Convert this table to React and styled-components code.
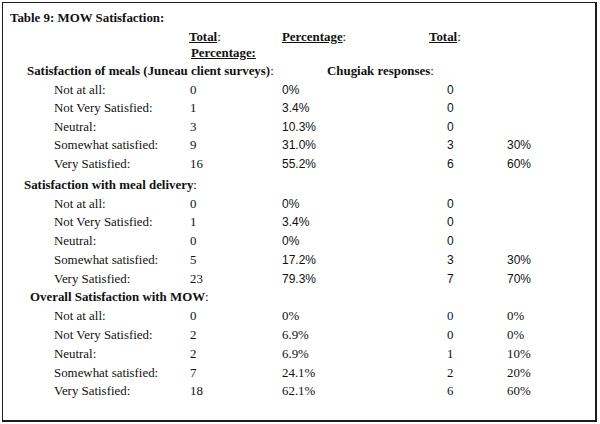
import React from "react";
import styled, { createGlobalStyle } from "styled-components";

const GlobalStyle = createGlobalStyle`
  html, body {
    margin: 0;
    padding: 0;
    background: #ffffff;
  }
  body {
    font-family: "Liberation Serif", "Times New Roman", serif;
    font-size: 12.9px;
    color: #111;
  }
`;

const Frame = styled.div`
  box-sizing: border-box;
  width: 595px;
  height: 420px;
  margin: 2px 0 0 2px;
  border: 1px solid #1c1c1c;
  border-right-width: 2px;
  border-bottom-width: 2px;
  padding-top: 5.5px;
`;

const Title = styled.div`
  height: 19px;
  line-height: 19px;
  padding-left: 7px;
  font-weight: bold;
`;

const HeadLine = styled.div`
  display: grid;
  grid-template-columns: 93px 147px auto;
  height: ${p => p.$h}px;
  line-height: ${p => p.$h}px;
  padding-left: ${p => p.$indent}px;
`;

const Under = styled.span`
  font-weight: bold;
  text-decoration: underline;
  text-underline-offset: 1px;
`;

const Bold = styled.span`
  font-weight: bold;
`;

const SectionHead = styled.div`
  display: grid;
  grid-template-columns: ${p => 327 - 3 - p.$indent}px auto;
  height: 19px;
  line-height: 19px;
  margin-top: ${p => p.$gap}px;
  padding-left: ${p => p.$indent}px;
  white-space: nowrap;
`;

const Row = styled.div`
  display: grid;
  grid-template-columns: 136px 92px 165px 60px auto;
  height: ${p => p.$h}px;
  line-height: ${p => p.$h}px;
  padding-left: 51px;
  white-space: nowrap;
`;

const Cell = styled.div`
  font-family: ${p =>
    p.$sans
      ? `"Liberation Sans", Arial, sans-serif`
      : `"Liberation Serif", "Times New Roman", serif`};
  font-size: ${p => (p.$sans ? "12px" : "12.9px")};
`;

const sections = [
  {
    title: "Satisfaction of meals (Juneau client surveys)",
    chugiak: true,
    indent: 24,
    gap: 2,
    rowH: 18.5,
    sans: true,
    rows: [
      ["Not at all:", "0", "0%", "0", ""],
      ["Not Very Satisfied:", "1", "3.4%", "0", ""],
      ["Neutral:", "3", "10.3%", "0", ""],
      ["Somewhat satisfied:", "9", "31.0%", "3", "30%"],
      ["Very Satisfied:", "16", "55.2%", "6", "60%"],
    ],
  },
  {
    title: "Satisfaction with meal delivery",
    indent: 21,
    gap: 2.5,
    rowH: 18.75,
    sans: true,
    rows: [
      ["Not at all:", "0", "0%", "0", ""],
      ["Not Very Satisfied:", "1", "3.4%", "0", ""],
      ["Neutral:", "0", "0%", "0", ""],
      ["Somewhat satisfied:", "5", "17.2%", "3", "30%"],
      ["Very Satisfied:", "23", "79.3%", "7", "70%"],
    ],
  },
  {
    title: "Overall Satisfaction with MOW",
    indent: 27,
    gap: 0,
    rowH: 18.75,
    sans: false,
    rows: [
      ["Not at all:", "0", "0%", "0", "0%"],
      ["Not Very Satisfied:", "2", "6.9%", "0", "0%"],
      ["Neutral:", "2", "6.9%", "1", "10%"],
      ["Somewhat satisfied:", "7", "24.1%", "2", "20%"],
      ["Very Satisfied:", "18", "62.1%", "6", "60%"],
    ],
  },
];

const App = () => (
  <>
    <GlobalStyle />
    <Frame>
      <Title>Table 9: MOW Satisfaction:</Title>
      <HeadLine $h={18} $indent={186}>
        <span><Under>Total</Under>:</span>
        <span><Under>Percentage</Under>:</span>
        <span><Under>Total</Under>:</span>
      </HeadLine>
      <HeadLine $h={14} $indent={188}>
        <Under>Percentage:</Under>
      </HeadLine>
      {sections.map(s => (
        <React.Fragment key={s.title}>
          <SectionHead $indent={s.indent} $gap={s.gap}>
            <span><Bold>{s.title}</Bold>:</span>
            {s.chugiak ? <span><Bold>Chugiak responses</Bold>:</span> : <span />}
          </SectionHead>
          {s.rows.map(r => (
            <Row key={r[0]} $h={s.rowH}>
              <Cell>{r[0]}</Cell>
              <Cell>{r[1]}</Cell>
              <Cell $sans={s.sans}>{r[2]}</Cell>
              <Cell $sans={s.sans}>{r[3]}</Cell>
              <Cell $sans={s.sans}>{r[4]}</Cell>
            </Row>
          ))}
        </React.Fragment>
      ))}
    </Frame>
  </>
);

export default App;
